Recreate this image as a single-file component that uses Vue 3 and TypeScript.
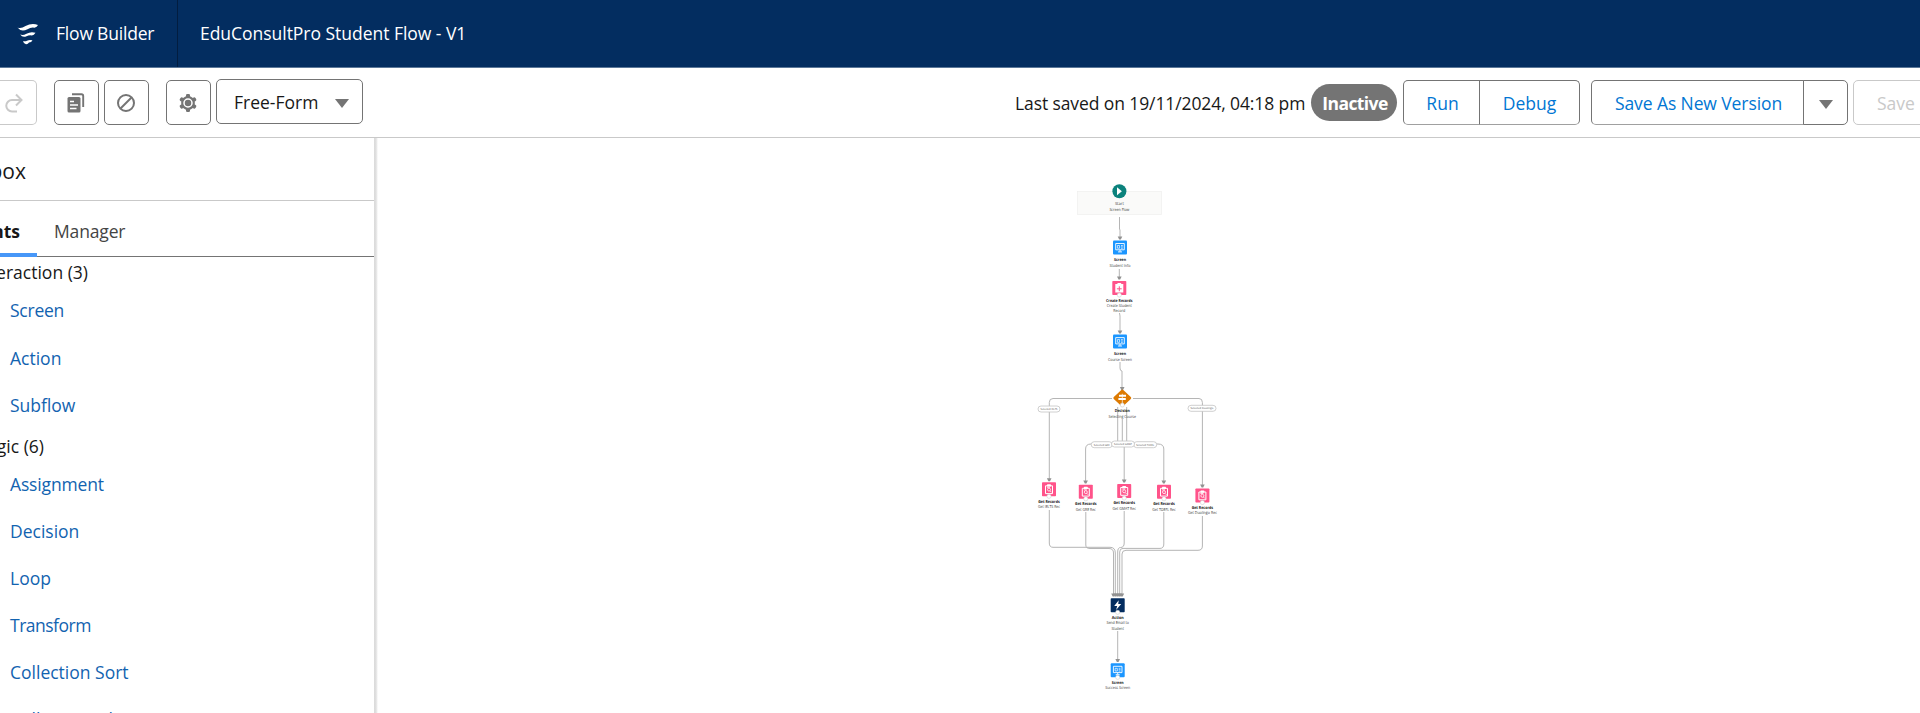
<script setup lang="ts">
interface Label { t: string; y: number; w: number; bold?: boolean }
interface FlowNode { kind: string; x: number; y: number; labels: Label[]; port?: boolean }

const groups = [
  { title: 'Interaction (3)', cls: 'interaction', items: ['Screen', 'Action', 'Subflow'] },
  { title: 'Logic (6)', cls: 'logic', items: ['Assignment', 'Decision', 'Loop', 'Transform', 'Collection Sort', 'Collection Filter'] },
]

const itemClass = (name: string) => name.toLowerCase().replace(' ', '-')

const nodes: FlowNode[] = [
  { kind: 'start', x: 1119.4, y: 191.3, labels: [{ t: 'Start', y: 205.1, w: 9 }, { t: 'Screen Flow', y: 211.1, w: 20 }] },
  { kind: 'screen', x: 1120, y: 247.5, labels: [{ t: 'Screen', y: 261, w: 12, bold: true }, { t: 'Student Info', y: 267, w: 21 }] },
  { kind: 'create', x: 1119.3, y: 288, port: true, labels: [{ t: 'Create Records', y: 302, w: 26.5, bold: true }, { t: 'Create Student', y: 307, w: 25 }, { t: 'Record', y: 312, w: 12 }] },
  { kind: 'screen', x: 1120, y: 341.6, labels: [{ t: 'Screen', y: 355.2, w: 12, bold: true }, { t: 'Course Screen', y: 361, w: 24 }] },
  { kind: 'decision', x: 1122.3, y: 398, port: true, labels: [{ t: 'Decision', y: 412, w: 15, bold: true }, { t: 'Selecting Course', y: 417.8, w: 27.5 }] },
  { kind: 'get', x: 1049, y: 489.3, port: true, labels: [{ t: 'Get Records', y: 503, w: 21.5, bold: true }, { t: 'Get IELTS Rec', y: 508, w: 22 }] },
  { kind: 'get', x: 1085.8, y: 491.8, port: true, labels: [{ t: 'Get Records', y: 505.2, w: 21.5, bold: true }, { t: 'Get GRE Rec', y: 511, w: 20 }] },
  { kind: 'get', x: 1124.2, y: 491, port: true, labels: [{ t: 'Get Records', y: 504.3, w: 21.5, bold: true }, { t: 'Get GMAT Rec', y: 510, w: 23.5 }] },
  { kind: 'get', x: 1164, y: 491.8, port: true, labels: [{ t: 'Get Records', y: 505.2, w: 21.5, bold: true }, { t: 'Get TOEFL Rec', y: 511, w: 23.5 }] },
  { kind: 'get', x: 1202.4, y: 495.5, port: true, labels: [{ t: 'Get Records', y: 509.2, w: 21.5, bold: true }, { t: 'Get Duolingo Rec', y: 514, w: 29 }] },
  { kind: 'action', x: 1117.7, y: 605.3, port: true, labels: [{ t: 'Action', y: 619, w: 12, bold: true }, { t: 'Send Email to', y: 624, w: 22.5 }, { t: 'Student', y: 630, w: 12.5 }] },
  { kind: 'screen', x: 1117.7, y: 670.3, port: true, labels: [{ t: 'Screen', y: 684, w: 12, bold: true }, { t: 'Success Screen', y: 689, w: 25 }] },
]

const edges = [
  'M1119.5 217V229L1120 230V238',
  'M1119.3 269V278',
  'M1119.5 313L1120 316V332',
  'M1120 362V368Q1120 371 1122 371V390',
  'M1112 398.5H1053Q1049.3 398.5 1049.3 402.5V479',
  'M1133 398.5H1199Q1202.4 398.5 1202.4 402.5V485',
  'M1117.7 407V442',
  'M1122.3 419V442',
  'M1126.7 407V442',
  'M1117.7 444H1091Q1085.6 444 1085.6 449V481',
  'M1124.2 446V480',
  'M1126.7 444H1158Q1163.8 444 1163.8 449V481',
  'M1049.3 510V543Q1049.3 547.3 1053 547.3H1110Q1115.3 547.3 1115.3 553V594',
  'M1085.8 512V545Q1085.8 548.5 1090 548.5H1109Q1113.5 548.5 1113.5 553V594',
  'M1124.2 511V543Q1124.2 547.5 1120.5 547.5Q1117.7 547.5 1117.7 552V594',
  'M1163.8 512V544Q1163.8 548.4 1160 548.4H1123Q1119.7 548.4 1119.7 552V594',
  'M1202.4 516V546Q1202.4 550.3 1198 550.3H1126Q1122 550.3 1122 554V594',
  'M1117.7 631V660',
]

const arrows = [
  [1120, 239.5], [1119.3, 279.5], [1120, 333.5], [1122.2, 390], [1049.2, 481.3], [1085.6, 483.5],
  [1124.2, 482.5], [1163.8, 483.5], [1202.4, 487.5], [1117.7, 662],
  [1113.5, 596.5], [1115.6, 596.5], [1117.7, 596.5], [1119.8, 596.5], [1121.9, 596.5],
]

const pills = [
  { x: 1049, y: 409, w: 22, t: 'Selected IELTS' },
  { x: 1202, y: 408.3, w: 28, t: 'Selected Duolingo' },
  { x: 1101.7, y: 444.7, w: 21, t: 'Selected GRE' },
  { x: 1145.2, y: 444.7, w: 23, t: 'Selected TOEFL' },
  { x: 1123, y: 444, w: 23, t: 'Selected GMAT' },
]
</script>

<template>
  <div class="app">
    <header class="topbar">
      <div class="brand">
        <svg class="logo" width="22" height="22" viewBox="0 0 22 22">
          <path d="M.5 4.500Q4 6 8.500 3Q15 -.5 21 2Q20 4.300 17.500 4.700Q14 4 10.500 6.200Q4 9.300 .5 4.500Z" />
          <path d="M3.200 11.500Q6 12.600 9.500 10.700Q14 8.200 18.500 9.800Q17 12.300 14.800 12.500Q12 12 9.500 13.300Q5.500 15 3.200 11.500Z" />
          <path d="M6 18Q8 18.800 10 17.800Q12.500 16.300 15.500 17.300Q14.500 19.600 12 19.600Q11 21.300 9 21.200Q6.500 20.800 6 18Z" />
        </svg>
        <span class="name">Flow Builder</span>
      </div>
      <h1 class="flow-title">EduConsultPro Student Flow - V1</h1>
    </header>

    <div class="toolbar">
      <button class="btn redo" aria-label="Redo">
        <svg width="18" height="20" viewBox="0 0 18 20"><path d="M12 18.500H7A5.700 5.700 0 0 1 7 7H16M11 1.500L16.500 7L11 12.500" fill="none" stroke="#c9c9c9" stroke-width="2" /></svg>
      </button>
      <button class="btn icon copy" aria-label="Copy">
        <svg width="18" height="20" viewBox="0 0 18 20">
          <path d="M5 1.200H14.500Q16.200 1.200 16.200 3V14" fill="none" stroke="#747474" stroke-width="1.900" />
          <rect x=".5" y="4" width="13" height="15.500" rx="1.500" fill="#747474" />
          <path d="M3 8.500H7M3 12H11M3 15.500H9.500" stroke="#fff" stroke-width="1.400" />
        </svg>
      </button>
      <button class="btn icon ban" aria-label="Deactivate">
        <svg width="20" height="20" viewBox="0 0 20 20"><g fill="none" stroke="#747474" stroke-width="2"><circle cx="10" cy="10" r="8" /><path d="M15.500 4.500L4.500 15.500" /></g></svg>
      </button>
      <button class="btn icon gear" aria-label="Settings">
        <svg width="20" height="20" viewBox="-10 -10 20 20">
          <g fill="#747474"><circle r="6.900" /><rect v-for="a in [0, 60, 120]" :key="a" x="-2" y="-9" width="4" height="18" rx="1.300" :transform="`rotate(${a})`" /></g>
          <circle r="4" fill="none" stroke="#fff" stroke-width="1.500" />
        </svg>
      </button>
      <button class="btn mode"><span>Free-Form</span><i class="caret"></i></button>
      <span class="saved">Last saved on 19/11/2024, 04:18 pm</span>
      <span class="status"><span>Inactive</span></span>
      <button class="btn text run"><span>Run</span></button>
      <button class="btn text debug"><span>Debug</span></button>
      <button class="btn text save-as"><span>Save As New Version</span></button>
      <button class="btn more" aria-label="More save options"><i class="caret"></i></button>
      <button class="btn save"><span>Save</span></button>
    </div>

    <main class="body">
      <aside class="side">
        <div class="side-title"><span>Toolbox</span></div>
        <div class="tabs">
          <div class="tab active"><span>Elements</span></div>
          <div class="tab manager"><span>Manager</span></div>
        </div>
        <section v-for="g in groups" :key="g.title" class="group">
          <h2 :class="g.cls"><span>{{ g.title }}</span></h2>
          <ul><li v-for="i in g.items" :key="i" :class="itemClass(i)">{{ i }}</li></ul>
        </section>
      </aside>
      <div class="side-edge"></div>

      <svg class="canvas" width="1542" height="575" viewBox="378 138 1542 575">
        <rect x="1077.500" y="191.500" width="84" height="23" fill="#fafaf9" stroke="#f0f0ef" stroke-width=".8" />
        <path v-for="e in edges" :key="e" :d="e" class="edge" />
        <path v-for="(a, i) in arrows" :key="i" :d="`M${a[0] - 2.300} ${a[1] - 3}h4.600l-1.500 3h-1.600z`" fill="#919191" />

        <g v-for="(n, i) in nodes" :key="'n' + i">
          <g :transform="`translate(${n.x} ${n.y})`">
            <template v-if="n.kind === 'start'">
              <circle r="7" fill="#0b827c" />
              <path d="M-2.400 -4L2.500 0L-2.400 4Z" fill="#fff" />
            </template>
            <template v-else-if="n.kind === 'screen'">
              <rect x="-7" y="-7" width="14" height="14" rx="1" fill="#1b96ff" />
              <path d="M-4.300 -4H4.300V2.300H-4.300ZM0 2.300V4.200M-2 4.400H2" fill="none" stroke="#fff" stroke-width=".9" />
              <path d="M-2.600 -2H-.4V.7H-2.600ZM1 -2H2.800M1 -.6H2.800M1 .8H2.800" fill="none" stroke="#fff" stroke-width=".7" />
            </template>
            <template v-else-if="n.kind === 'create' || n.kind === 'get'">
              <rect x="-7" y="-7" width="14" height="14" rx=".8" fill="#ff538a" />
              <path v-if="n.kind === 'create'" d="M-4 -4H4V4.500H-4Z" fill="#fff" />
              <path v-else d="M-3.500 -3.500H3.500V4.300H-3.500Z" fill="none" stroke="#fff" stroke-width="1" />
              <rect x="-2" y="-5" width="4" height="2.300" rx=".7" fill="#fff" />
              <path v-if="n.kind === 'create'" d="M0 -1.700V3.200M-2.400 .8H2.400" stroke="#ff538a" stroke-width="1" />
              <g v-else fill="none" stroke="#fff" stroke-width=".8"><circle cx="0" cy=".3" r="1.500" /><path d="M1 1.500L2.500 3M-2 -2H1" /></g>
            </template>
            <template v-else-if="n.kind === 'decision'">
              <path d="M-8.500 -1L-1 -8Q0 -9 1 -8L8.500 -1Q9.500 0 8.500 1L1 8Q0 9 -1 8L-8.500 1Q-9.500 0 -8.500 -1Z" fill="#dd7a01" />
              <path d="M-3.300 -2.200H3.700M-3.900 1H3.500" stroke="#fff" stroke-width="1.900" />
              <path d="M0 -4.200V5" stroke="#fff" stroke-width=".7" />
            </template>
            <template v-else>
              <rect x="-7" y="-7" width="14" height="14" rx=".8" fill="#032d60" />
              <path d="M1 -5L-3.500 .7H-.5L-1.600 4.600L3.500 -1.400H.5Z" fill="#fff" />
            </template>
            <circle v-if="n.port" cx="0" cy="7" r="2.100" fill="#fff" stroke="#c9c9c9" stroke-width=".5" />
          </g>
          <text v-for="l in n.labels" :key="l.t" :x="n.x" :y="l.y" class="lbl" :class="{ bold: l.bold }" :textLength="l.w" lengthAdjust="spacingAndGlyphs">{{ l.t }}</text>
        </g>

        <g v-for="p in pills" :key="p.t">
          <rect :x="p.x - p.w / 2" :y="p.y - 3" :width="p.w" height="6" rx="3" fill="#fff" stroke="#c4c4c4" stroke-width=".8" />
          <text :x="p.x" :y="p.y + .9" class="pill" :textLength="p.w - 5" lengthAdjust="spacingAndGlyphs">{{ p.t }}</text>
        </g>
      </svg>
    </main>
  </div>
</template>

<style>
html, body { margin: 0; overflow: hidden; background: #fff; }
</style>

<style scoped>
.app { width: 1920px; height: 713px; overflow: hidden; display: flex; flex-direction: column; font-family: "Open Sans", "Noto Sans", sans-serif; font-size: 17.500px; color: #181818; background: #fff; }
* { box-sizing: border-box; }
span, h1, li { white-space: nowrap; }
.topbar { height: 68px; flex: none; display: flex; align-items: center; background: #032d60; border-bottom: 1px solid #5c7899; color: #fff; }
.brand { width: 178px; height: 67px; display: flex; align-items: center; padding-left: 17px; border-right: 1px solid #021d40; }
.logo { fill: #fff; margin-right: 17px; flex: none; }
.name { letter-spacing: -.2px; padding-bottom: 1px; }
.flow-title { margin: 0 0 0 22px; padding-bottom: 1px; font-size: 17.500px; font-weight: 400; letter-spacing: -.03px; }
.toolbar { height: 70px; flex: none; display: flex; align-items: flex-start; padding-top: 12px; border-bottom: 1px solid #c9c9c9; }
.btn { height: 45px; flex: none; padding: 0; margin: 0; background: #fff; border: 1px solid #747474; border-radius: 5px; font: inherit; color: #0176d3; display: flex; align-items: center; justify-content: center; }
.redo { width: 37px; border-color: #c9c9c9; border-left: 0; border-radius: 0 5px 5px 0; padding: 0 9px 0 0; }
.icon { width: 45px; padding: 1px 1px 0 0; }
.copy { margin-left: 17px; }
.ban { margin-left: 5px; }
.gear { margin-left: 17px; }
.mode { width: 147px; margin: -1px 0 0 5px; color: #181818; justify-content: space-between; padding: 0 13px 0 17px; }
.caret { width: 0; height: 0; margin-top: 3px; border: 7.500px solid transparent; border-top: 9px solid #747474; border-bottom: 0; }
.saved { margin-left: 652px; width: 296px; flex: none; line-height: 46px; letter-spacing: -.1px; }
.status { width: 86px; height: 37px; flex: none; margin-top: 4px; padding-left: 2px; border-radius: 19px; background: #747474; color: #fff; font-weight: 700; display: flex; align-items: center; justify-content: center; letter-spacing: -.6px; }
.text { border-bottom-color: #a0a0a0; }
.run { width: 77px; margin-left: 6px; padding-left: 2px; border-radius: 5px 0 0 5px; }
.debug { width: 101px; margin-left: -1px; border-radius: 0 5px 5px 0; }
.save-as { width: 213px; margin-left: 11px; padding-left: 2px; border-radius: 5px 0 0 5px; letter-spacing: -.1px; }
.more { width: 45px; margin-left: -1px; border-radius: 0 5px 5px 0; }
.save { width: 90px; margin-left: 5px; border-color: #c9c9c9; color: #c9c9c9; justify-content: flex-start; padding-left: 23px; }
.body { flex: 1; display: flex; min-height: 0; }
.side { width: 374px; height: 575px; flex: none; overflow: hidden; }
.side-edge { width: 4px; flex: none; background: linear-gradient(to right, #dadada, #e0e0e0 50%, #fff); }
.side-title { height: 63px; width: 100%; border-bottom: 1px solid #c9c9c9; font-size: 21px; }
.side-title span { width: 26px; display: flex; justify-content: flex-end; line-height: 67px; }
.tabs { height: 56px; display: flex; border-bottom: 1px solid #747474; }
.tab { height: 56px; line-height: 60px; }
.active { width: 37px; border-bottom: 4px solid #4797f8; font-weight: 700; }
.active span { width: 20px; display: flex; justify-content: flex-end; }
.manager { margin-left: 17px; color: #444; letter-spacing: -.15px; }
.group h2 { margin: 0; height: 30px; line-height: 30px; font-size: 17.500px; font-weight: 400; display: flex; justify-content: flex-end; }
.group .interaction { width: 88px; }
.group .logic { width: 44px; margin-top: 5px; height: 27px; line-height: 27px; }
.group ul { list-style: none; margin: 0; padding: 0 0 0 10px; color: #1263b0; }
.group li { height: 47px; line-height: 49px; }
.group .screen { letter-spacing: -.25px; line-height: 47px; }
.assignment { letter-spacing: -.15px; }
.transform { letter-spacing: -.5px; }
.group .collection-filter { line-height: 48px; }
.canvas { flex: none; display: block; }
.edge { fill: none; stroke: #b5b5b5; stroke-width: 1; }
.lbl { font-size: 4.100px; text-anchor: middle; fill: #3e3e3e; text-rendering: geometricPrecision; }
.bold { font-weight: 700; fill: #181818; }
.pill { font-size: 2.700px; text-anchor: middle; fill: #555; text-rendering: geometricPrecision; }
</style>
